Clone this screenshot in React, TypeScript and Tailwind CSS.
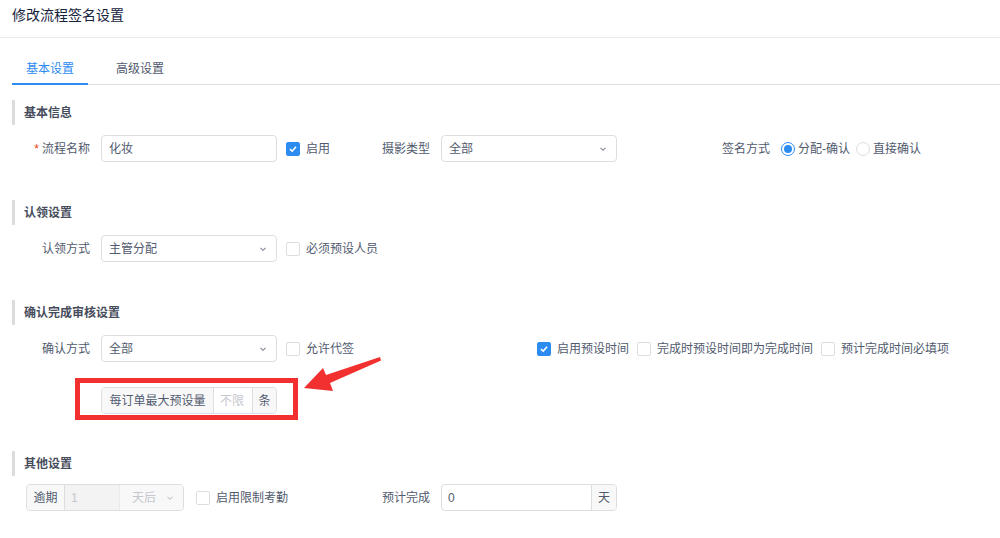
import React from "react";

function Check({ checked = false, label }: { checked?: boolean; label: string }) {
  return (
    <label className="flex items-center gap-[6px] mr-[8px] whitespace-nowrap shrink-0">
      <span
        className={
          checked
            ? "w-[14px] h-[14px] rounded-[2px] bg-[#2d8cf0] border border-[#2d8cf0] flex items-center justify-center"
            : "w-[14px] h-[14px] rounded-[2px] bg-white border border-[#dcdee2]"
        }
      >
        {checked && (
          <svg width="10" height="10" viewBox="0 0 10 10">
            <path d="M2 5.2 L4.2 7.2 L8 2.8" fill="none" stroke="#fff" strokeWidth="1.6" />
          </svg>
        )}
      </span>
      <span>{label}</span>
    </label>
  );
}

function Radio({ checked = false, label }: { checked?: boolean; label: string }) {
  return (
    <label className="flex items-center gap-[3px] mr-[6px] whitespace-nowrap shrink-0">
      <span
        className={
          checked
            ? "w-[14px] h-[14px] rounded-full border border-[#2d8cf0] bg-white flex items-center justify-center"
            : "w-[14px] h-[14px] rounded-full border border-[#dcdee2] bg-white"
        }
      >
        {checked && <span className="w-[8px] h-[8px] rounded-full bg-[#2d8cf0]" />}
      </span>
      <span>{label}</span>
    </label>
  );
}

function Chevron({ color = "#808695" }: { color?: string }) {
  return (
    <svg width="10" height="10" viewBox="0 0 10 10">
      <path d="M2.5 3.8 L5 6.3 L7.5 3.8" fill="none" stroke={color} strokeWidth="1.1" />
    </svg>
  );
}

function Select({ value }: { value: string }) {
  return (
    <div className="shrink-0 w-[176px] h-[27px] rounded-[4px] border border-[#dcdee2] bg-white flex items-center justify-between pl-[7px] pr-[8px] text-[#515a6e]">
      <span>{value}</span>
      <Chevron />
    </div>
  );
}

function Item({ label, required = false, children }: { label: string; required?: boolean; children?: React.ReactNode }) {
  return (
    <div className="flex items-center h-[27px]">
      <div className="shrink-0 w-[89px] pr-[11px] text-right whitespace-nowrap">
        {required && <span className="text-[#ed4014] mr-[3px]">*</span>}
        {label}
      </div>
      {children}
    </div>
  );
}

function SectionTitle({ title }: { title: string }) {
  return (
    <div className="h-[25px] flex items-center border-l-[3px] border-[#dcdcdc] pl-[9px] font-bold text-[#464c5b]">
      {title}
    </div>
  );
}

export default function App() {
  return (
    <div className="relative w-[1000px] h-[538px] overflow-hidden bg-white text-[12px] text-[#515a6e] font-['Liberation_Sans','Noto_Sans_CJK_SC',sans-serif]">
      {/* header */}
      <div className="h-[38px] border-b border-[#e8eaec] pl-3 pt-[5px] leading-[20px] text-[14px] text-[#17233d]">
        修改流程签名设置
      </div>

      {/* tabs */}
      <div className="ml-3 mt-[16px] flex gap-[14px] border-b border-[#dcdee2]">
        <div className="relative h-[30px] px-[14px] flex items-center text-[#2d8cf0]">
          基本设置
          <span className="absolute left-0 right-0 bottom-[-1px] h-[2px] bg-[#2d8cf0]" />
        </div>
        <div className="h-[30px] px-[14px] flex items-center">高级设置</div>
      </div>

      <div className="pl-3 pt-[15px]">
        {/* 基本信息 */}
        <SectionTitle title="基本信息" />
        <div className="mt-[10px] grid grid-cols-[340px_340px_auto]">
          <Item label="流程名称" required>
            <div className="shrink-0 w-[176px] h-[27px] rounded-[4px] border border-[#dcdee2] flex items-center pl-[7px]">化妆</div>
            <div className="ml-[9px]">
              <Check checked label="启用" />
            </div>
          </Item>
          <Item label="摄影类型">
            <Select value="全部" />
          </Item>
          <Item label="签名方式">
            <Radio checked label="分配-确认" />
            <Radio label="直接确认" />
          </Item>
        </div>

        {/* 认领设置 */}
        <div className="mt-[38px]">
          <SectionTitle title="认领设置" />
        </div>
        <div className="mt-[10px]">
          <Item label="认领方式">
            <Select value="主管分配" />
            <div className="ml-[9px]">
              <Check label="必须预设人员" />
            </div>
          </Item>
        </div>

        {/* 确认完成审核设置 */}
        <div className="mt-[38px]">
          <SectionTitle title="确认完成审核设置" />
        </div>
        <div className="mt-[10px] flex items-center">
          <div className="w-[340px] shrink-0">
            <Item label="确认方式">
              <Select value="全部" />
              <div className="ml-[9px]">
                <Check label="允许代签" />
              </div>
            </Item>
          </div>
          <div className="ml-[185px] flex items-center">
            <Check checked label="启用预设时间" />
            <Check label="完成时预设时间即为完成时间" />
            <Check label="预计完成时间必填项" />
          </div>
        </div>
        <div className="mt-[25px] pl-[89px]">
          <div className="relative w-[176px]">
            <div className="flex h-[27px] rounded-[4px] border border-[#dcdee2] overflow-hidden">
              <div className="w-[112px] bg-[#f8f8f9] border-r border-[#dcdee2] flex items-center justify-center whitespace-nowrap">
                每订单最大预设量
              </div>
              <div className="w-[38px] flex items-center pl-[6px] text-[#c5c8ce]">不限</div>
              <div className="flex-1 bg-[#f8f8f9] border-l border-[#dcdee2] flex items-center justify-center">条</div>
            </div>
            <div className="absolute left-[-26px] right-[-21px] top-[-9px] bottom-[-6px] border-[5px] border-[#f23030] pointer-events-none" />
          </div>
        </div>

        {/* 其他设置 */}
        <div className="mt-[37px]">
          <SectionTitle title="其他设置" />
        </div>
        <div className="mt-[8px] grid grid-cols-[340px_340px_auto]">
          <div className="flex items-center h-[27px] pl-[14px]">
            <div className="shrink-0 flex h-[27px] w-[158px] rounded-[4px] border border-[#dcdee2] overflow-hidden">
              <div className="w-[38px] bg-[#f8f8f9] border-r border-[#dcdee2] flex items-center justify-center">逾期</div>
              <div className="w-[54px] bg-[#f3f3f3] flex items-center pl-[6px] text-[#c5c8ce]">1</div>
              <div className="flex-1 bg-[#f8f8f9] border-l border-[#e8eaec] flex items-center justify-between pl-[12px] pr-[8px] text-[#c5c8ce]">
                <span>天后</span>
                <Chevron color="#c5c8ce" />
              </div>
            </div>
            <div className="ml-[12px]">
              <Check label="启用限制考勤" />
            </div>
          </div>
          <Item label="预计完成">
            <div className="shrink-0 flex h-[27px] w-[176px] rounded-[4px] border border-[#dcdee2] overflow-hidden">
              <div className="flex-1 flex items-center pl-[6px]">0</div>
              <div className="w-[25px] bg-[#f8f8f9] border-l border-[#dcdee2] flex items-center justify-center">天</div>
            </div>
          </Item>
          <div />
        </div>
      </div>

      {/* annotation arrow */}
      <svg className="absolute left-0 top-0 pointer-events-none" width="1000" height="538" viewBox="0 0 1000 538">
        <polygon
          points="304,388 323,368 326,375 380,357 381,360.5 330,383 333,391"
          fill="#f23030"
        />
      </svg>
    </div>
  );
}
